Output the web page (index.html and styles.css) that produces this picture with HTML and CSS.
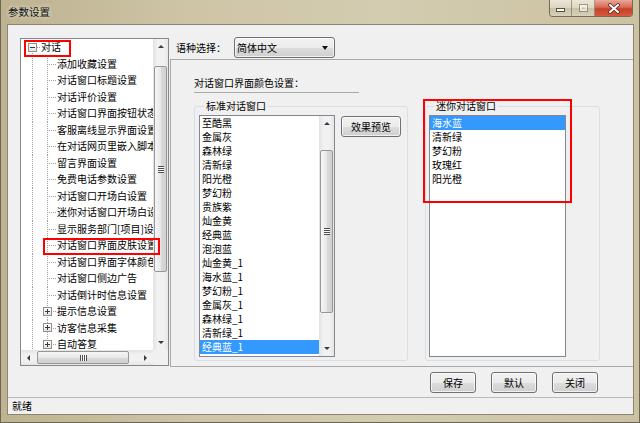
FILE: index.html
```html
<!doctype html>
<html lang="zh-CN">
<head>
    <meta charset="UTF-8">
    <meta name="viewport" content="width=device-width, initial-scale=1.0">
    <title>参数设置</title>
    <link rel="stylesheet" href="styles.css">
</head>
<body>
    <div class="window">
        <!-- Title bar -->
        <div class="titlebar">
            <span class="title">参数设置</span>
            <div class="caption-btns">
                <span class="cap min"><i></i></span>
                <span class="cap max"><i></i></span>
                <span class="cap close">
                    <svg width="14" height="11" viewBox="0 0 14 11">
                        <path d="M3 2 L11 9 M11 2 L3 9" stroke="#5a2a20" stroke-width="3.6" stroke-linecap="round"/>
                        <path d="M3 2 L11 9 M11 2 L3 9" stroke="#fff" stroke-width="2" stroke-linecap="round"/>
                    </svg>
                </span>
            </div>
        </div>

        <div class="client">
            <div class="main">
                <!-- Settings tree -->
                <div class="tree">
                    <div class="tree-rows">
                        <div class="row root"><span class="pm minus"></span><span class="dash"></span><span class="txt">对话</span></div>
                        <div class="row"><span class="g1"></span><span class="g2"></span><span class="txt">添加收藏设置</span></div>
                        <div class="row"><span class="g1"></span><span class="g2"></span><span class="txt">对话窗口标题设置</span></div>
                        <div class="row"><span class="g1"></span><span class="g2"></span><span class="txt">对话评价设置</span></div>
                        <div class="row"><span class="g1"></span><span class="g2"></span><span class="txt">对话窗口界面按钮状态设置</span></div>
                        <div class="row"><span class="g1"></span><span class="g2"></span><span class="txt">客服离线显示界面设置</span></div>
                        <div class="row"><span class="g1"></span><span class="g2"></span><span class="txt">在对话网页里嵌入脚本</span></div>
                        <div class="row"><span class="g1"></span><span class="g2"></span><span class="txt">留言界面设置</span></div>
                        <div class="row"><span class="g1"></span><span class="g2"></span><span class="txt">免费电话参数设置</span></div>
                        <div class="row"><span class="g1"></span><span class="g2"></span><span class="txt">对话窗口开场白设置</span></div>
                        <div class="row"><span class="g1"></span><span class="g2"></span><span class="txt">迷你对话窗口开场白设置</span></div>
                        <div class="row"><span class="g1"></span><span class="g2"></span><span class="txt">显示服务部门[项目]设置</span></div>
                        <div class="row"><span class="g1"></span><span class="g2"></span><span class="txt">对话窗口界面皮肤设置</span></div>
                        <div class="row"><span class="g1"></span><span class="g2"></span><span class="txt">对话窗口界面字体颜色</span></div>
                        <div class="row"><span class="g1"></span><span class="g2"></span><span class="txt">对话窗口侧边广告</span></div>
                        <div class="row"><span class="g1"></span><span class="g2"></span><span class="txt">对话倒计时信息设置</span></div>
                        <div class="row"><span class="g1"></span><span class="g2 branch"><span class="pm plus"></span></span><span class="txt">提示信息设置</span></div>
                        <div class="row"><span class="g1"></span><span class="g2 branch"><span class="pm plus"></span></span><span class="txt">访客信息采集</span></div>
                        <div class="row"><span class="g1"></span><span class="g2 branch"><span class="pm plus"></span></span><span class="txt">自动答复</span></div>
                    </div>
                    <div class="vscroll">
                        <span class="sb-btn"><i class="arr-up"></i></span>
                        <div class="track"><div class="thumb-v tree-thumb"><i class="grip"></i></div></div>
                        <span class="sb-btn"><i class="arr-down"></i></span>
                    </div>
                    <div class="hscroll">
                        <span class="sb-btn-h"><i class="arr-left"></i></span>
                        <div class="track-h"><div class="thumb-h"><i class="grip-h"></i></div></div>
                        <span class="sb-btn-h"><i class="arr-right"></i></span>
                    </div>
                    <div class="corner"></div>
                    <span class="mark mark-root"></span>
                    <span class="mark mark-skin"></span>
                </div>

                <!-- Right side -->
                <div class="right">
                    <div class="lang-row">
                        <span class="lang-label">语种选择：</span>
                        <div class="combo"><span>简体中文</span><i class="arr-combo"></i></div>
                    </div>

                    <div class="panel">
                        <div class="section-title">对话窗口界面颜色设置：</div>
                        <div class="groups">
                            <fieldset class="group std">
                                <legend>标准对话窗口</legend>
                                <div class="listbox std-list">
                                    <div class="items">
                                        <div class="item">至酷黑</div>
                                        <div class="item">金属灰</div>
                                        <div class="item">森林绿</div>
                                        <div class="item">清新绿</div>
                                        <div class="item">阳光橙</div>
                                        <div class="item">梦幻粉</div>
                                        <div class="item">贵族紫</div>
                                        <div class="item">灿金黄</div>
                                        <div class="item">经典蓝</div>
                                        <div class="item">泡泡蓝</div>
                                        <div class="item">灿金黄_1</div>
                                        <div class="item">海水蓝_1</div>
                                        <div class="item">梦幻粉_1</div>
                                        <div class="item">金属灰_1</div>
                                        <div class="item">森林绿_1</div>
                                        <div class="item">清新绿_1</div>
                                        <div class="item sel">经典蓝_1</div>
                                    </div>
                                    <div class="vscroll">
                                        <span class="sb-btn"><i class="arr-up"></i></span>
                                        <div class="track"><div class="thumb-v list-thumb"><i class="grip"></i></div></div>
                                        <span class="sb-btn"><i class="arr-down"></i></span>
                                    </div>
                                </div>
                                <button class="btn preview-btn">效果预览</button>
                            </fieldset>

                            <fieldset class="group mini">
                                <legend>迷你对话窗口</legend>
                                <div class="listbox mini-list">
                                    <div class="items">
                                        <div class="item sel">海水蓝</div>
                                        <div class="item">清新绿</div>
                                        <div class="item">梦幻粉</div>
                                        <div class="item">玫瑰红</div>
                                        <div class="item">阳光橙</div>
                                    </div>
                                </div>
                            </fieldset>
                        </div>
                        <span class="mark mark-mini"></span>
                    </div>

                    <div class="btn-row">
                        <button class="btn">保存</button>
                        <button class="btn">默认</button>
                        <button class="btn">关闭</button>
                    </div>
                </div>
            </div>

            <div class="statusbar">就绪</div>
        </div>
    </div>
</body>
</html>
```

FILE: styles.css
```css
* {
    box-sizing: border-box;
}
html, body {
    margin: 0;
}
body {
    font-family: "Noto Sans CJK SC", "Microsoft YaHei", sans-serif;
    font-size: 10px;
    line-height: 14px;
    color: #000;
    background: #c9c0a1;
}

/* window frame */
.window {
    width: 640px;
    height: 423px;
    display: flex;
    flex-direction: column;
    padding: 0 6px 8px 7px;
    background: linear-gradient(to right, #bdb391, #cec5a7 30%, #d4ccb0 60%, #cbc2a2);
    box-shadow: inset 1px 0 #6b6552, inset -1px 0 #6b6552, inset 0 -1px #6b6552;
}
.titlebar {
    height: 24px;
    flex-shrink: 0;
    display: flex;
    align-items: flex-start;
}
.title {
    padding: 5px 0 0 1px;
    font-size: 10.5px;
    color: #111;
    text-shadow: 0 0 5px rgba(255, 255, 255, 0.8);
}
.caption-btns {
    margin-left: auto;
    margin-right: 1px;
    display: flex;
    height: 17px;
    border: 1px solid rgba(60, 50, 30, 0.6);
    border-top: 0;
    border-radius: 0 0 4px 4px;
    overflow: hidden;
}
.cap {
    display: flex;
    align-items: center;
    justify-content: center;
}
.cap.min, .cap.max {
    width: 22px;
    background: linear-gradient(#ebe6d8, #dcd5bf 50%, #c9c1a6 51%, #d7d0ba);
    border-right: 1px solid rgba(80, 70, 50, 0.45);
}
.cap.max {
    width: 23px;
}
.cap.close {
    width: 37px;
    background: linear-gradient(#e9a89a, #d86a55 45%, #c7412a 55%, #d8573c);
}
.cap.min i {
    width: 9px;
    height: 4px;
    margin-top: 3px;
    background: #fff;
    border: 1px solid #55503f;
}
.cap.max i {
    width: 9px;
    height: 8px;
    border: 1px solid rgba(90, 85, 70, 0.5);
    box-shadow: inset 0 0 0 2px rgba(255, 255, 255, 0.6);
}

.client {
    flex: 1;
    display: flex;
    flex-direction: column;
    background: #f0f0f0;
    border: 1px solid #8a8575;
}
.main {
    flex: 1;
    display: flex;
    align-items: flex-start;
    padding: 12px 0 0 12px;
}

/* tree */
.tree {
    position: relative;
    width: 149px;
    height: 328px;
    margin-top: 1px;
    border: 1px solid #828790;
    background: #fff;
    display: grid;
    grid-template-columns: 1fr 15px;
    grid-template-rows: 1fr 15px;
}
.tree-rows {
    overflow: hidden;
    white-space: nowrap;
}
.row {
    display: flex;
    align-items: center;
    height: 16.5px;
}
.row.root {
    padding-left: 7px;
    background: repeating-linear-gradient(#a0a0a0 0 1px, transparent 1px 2px) 11px 12px / 1px 5px no-repeat;
}
.pm {
    width: 9px;
    height: 9px;
    flex-shrink: 0;
    border: 1px solid #919191;
    background: linear-gradient(#fff, #e2e2e2);
    position: relative;
}
.pm::before {
    content: "";
    position: absolute;
    left: 1px;
    top: 3px;
    width: 5px;
    height: 1px;
    background: #3a3a3a;
}
.pm.plus::after {
    content: "";
    position: absolute;
    left: 3px;
    top: 1px;
    width: 1px;
    height: 5px;
    background: #3a3a3a;
}
.dash {
    width: 3px;
    border-top: 1px dotted #a0a0a0;
    margin-right: 1px;
}
.g1 {
    width: 19px;
    align-self: stretch;
    flex-shrink: 0;
    background: repeating-linear-gradient(#a0a0a0 0 1px, transparent 1px 2px) 11px 0 / 1px 100% no-repeat;
}
.g2 {
    width: 17px;
    align-self: stretch;
    flex-shrink: 0;
    display: flex;
    align-items: center;
    background:
        repeating-linear-gradient(#a0a0a0 0 1px, transparent 1px 2px) 7px 0 / 1px 100% no-repeat,
        repeating-linear-gradient(to right, #a0a0a0 0 1px, transparent 1px 2px) 9px 8px / 7px 1px no-repeat;
}
.g2.branch {
    padding-left: 3px;
}

/* scrollbars */
.vscroll {
    display: flex;
    flex-direction: column;
    width: 15px;
    background: linear-gradient(to right, #e2e2e2, #f1f1f1 30%, #f1f1f1 70%, #e6e6e6);
}
.sb-btn {
    height: 15px;
    flex-shrink: 0;
    display: flex;
    align-items: center;
    justify-content: center;
}
.track {
    flex: 1;
}
.thumb-v {
    margin: 0 1px;
    border: 1px solid #979797;
    border-radius: 2px;
    background: linear-gradient(to right, #f6f6f6, #e8e8e8 50%, #dadada 51%, #d0d0d0);
    display: flex;
    align-items: center;
    justify-content: center;
}
.tree-thumb {
    margin-top: 12px;
    height: 206px;
}
.list-thumb {
    margin-top: 19px;
    height: 163px;
}
.grip {
    width: 6px;
    height: 7px;
    background: repeating-linear-gradient(#4e4e4e 0 1px, #fafafa 1px 2px);
}
.hscroll {
    display: flex;
    background: linear-gradient(#e2e2e2, #f1f1f1 30%, #f1f1f1 70%, #e6e6e6);
}
.sb-btn-h {
    width: 15px;
    flex-shrink: 0;
    display: flex;
    align-items: center;
    justify-content: center;
}
.track-h {
    flex: 1;
}
.thumb-h {
    margin: 1px 0 1px 1px;
    width: 92px;
    height: 13px;
    border: 1px solid #979797;
    border-radius: 2px;
    background: linear-gradient(#f6f6f6, #e8e8e8 50%, #dadada 51%, #d0d0d0);
    display: flex;
    align-items: center;
    justify-content: center;
}
.grip-h {
    width: 7px;
    height: 6px;
    background: repeating-linear-gradient(to right, #4e4e4e 0 1px, #fafafa 1px 2px);
}
.corner {
    background: #f0f0f0;
}
.arr-up, .arr-down, .arr-left, .arr-right, .arr-combo {
    width: 0;
    height: 0;
}
.arr-up {
    border-left: 3px solid transparent;
    border-right: 3px solid transparent;
    border-bottom: 3px solid #3c3c3c;
}
.arr-down {
    border-left: 3px solid transparent;
    border-right: 3px solid transparent;
    border-top: 3px solid #3c3c3c;
}
.arr-left {
    border-top: 3px solid transparent;
    border-bottom: 3px solid transparent;
    border-right: 3px solid #3c3c3c;
}
.arr-right {
    border-top: 3px solid transparent;
    border-bottom: 3px solid transparent;
    border-left: 3px solid #3c3c3c;
}

/* red marks */
.mark {
    position: absolute;
    border: 2px solid #f00;
}
.mark-root {
    left: 3px;
    top: 1px;
    width: 47px;
    height: 17px;
}
.mark-skin {
    left: 22px;
    top: 199px;
    width: 117px;
    height: 17px;
}
.mark-mini {
    left: 252px;
    top: 39px;
    width: 149px;
    height: 104px;
}

/* right column */
.right {
    flex: 1;
    margin-left: 1px;
    display: flex;
    flex-direction: column;
}
.lang-row {
    height: 21px;
    display: flex;
    align-items: center;
    padding-left: 6px;
}
.lang-label {
    width: 58px;
}
.combo {
    width: 101px;
    height: 21px;
    display: flex;
    align-items: center;
    padding: 0 6px 0 2px;
    border: 1px solid #707070;
    border-radius: 3px;
    background: linear-gradient(#f2f2f2, #ebebeb 50%, #dddddd 51%, #cfcfcf);
    box-shadow: inset 0 0 0 1px rgba(255, 255, 255, 0.7);
}
.arr-combo {
    margin-left: auto;
    border-left: 3px solid transparent;
    border-right: 3px solid transparent;
    border-top: 4px solid #111;
}
.panel {
    position: relative;
    margin-top: 1px;
    height: 308px;
    padding: 16px 0 5px 23px;
    border-top: 1px solid #a9a9a9;
    border-left: 1px solid #a9a9a9;
    border-bottom: 1px solid #a9a9a9;
}
.section-title {
    width: 165px;
    padding-bottom: 2px;
    border-bottom: 1px solid #a9a9a9;
}
.groups {
    display: flex;
    gap: 17px;
    margin-top: 6px;
}
.group {
    margin: 0;
    min-width: 0;
    height: 262px;
    border: 1px solid #d5dfe5;
    border-radius: 3px;
    display: flex;
    align-items: flex-start;
    padding: 2px 6px 3px 4px;
}
.group legend {
    padding: 0 2px;
    margin-left: 5px;
    line-height: 14px;
}
.group.mini {
    padding: 2px 33px 3px 3px;
}
.listbox {
    height: 242px;
    display: flex;
    border: 1px solid #828790;
    background: #fff;
}
.std-list {
    width: 136px;
}
.mini-list {
    width: 137px;
}
.items {
    flex: 1;
    overflow: hidden;
}
.item {
    height: 14px;
    padding-left: 2px;
    white-space: nowrap;
}
.item.sel {
    background: #3399ff;
    color: #fff;
}

/* buttons */
.btn {
    width: 46px;
    height: 21px;
    padding: 0;
    font: inherit;
    color: #000;
    border: 1px solid #707070;
    border-radius: 3px;
    background: linear-gradient(#f2f2f2, #ebebeb 50%, #dddddd 51%, #cfcfcf);
    box-shadow: inset 0 0 0 1px rgba(255, 255, 255, 0.7);
}
.preview-btn {
    width: 60px;
    margin: 1px 0 0 6px;
}
.btn-row {
    display: flex;
    justify-content: flex-end;
    gap: 15px;
    margin-top: 5px;
    padding-right: 35px;
}

.statusbar {
    height: 17px;
    flex-shrink: 0;
    padding-left: 4px;
    line-height: 16px;
    border-top: 1px solid #b9b9b9;
}
```
